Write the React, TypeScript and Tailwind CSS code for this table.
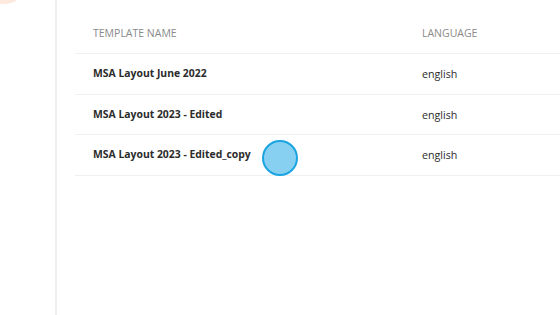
const templates = [
  { name: 'MSA Layout June 2022', language: 'english' },
  { name: 'MSA Layout 2023 - Edited', language: 'english' },
  { name: 'MSA Layout 2023 - Edited_copy', language: 'english' },
];

export default function App() {
  return (
    <div
      className="flex h-[315px] w-[560px] overflow-hidden bg-white"
      style={{ fontFamily: '"Open Sans", sans-serif' }}
    >
      {/* Sidebar */}
      <aside className="relative w-[57px] shrink-0 border-r-2 border-[#efefef]">
        <div className="absolute -left-[20px] -top-[44px] h-[48px] w-[48px] rounded-full bg-[#fde9de]" />
      </aside>

      {/* Templates table */}
      <main className="flex-1 pl-[18px] pt-[20px]">
        <div className="flex h-[34px] items-start border-b border-[#f0f0f0] text-[10.5px] uppercase text-[#8a8a8a]">
          <div className="w-[347px] pl-[18px] pt-[6px]">Template name</div>
          <div className="pt-[6px]">Language</div>
        </div>
        {templates.map((t, i) => (
          <div
            key={t.name}
            className="relative flex h-[40.5px] items-center border-b border-[#f0f0f0] text-[#2b2b2b]"
          >
            <div className="w-[347px] pl-[18px] pt-px text-[10.4px] font-bold">{t.name}</div>
            <div className="pt-px text-[10.7px]">{t.language}</div>
            {i === 2 && (
              <span className="absolute left-[187px] top-[5px] h-[36px] w-[36px] rounded-full border-2 border-[#1ba4e1] bg-[#88d0f1]" />
            )}
          </div>
        ))}
      </main>
    </div>
  );
}
